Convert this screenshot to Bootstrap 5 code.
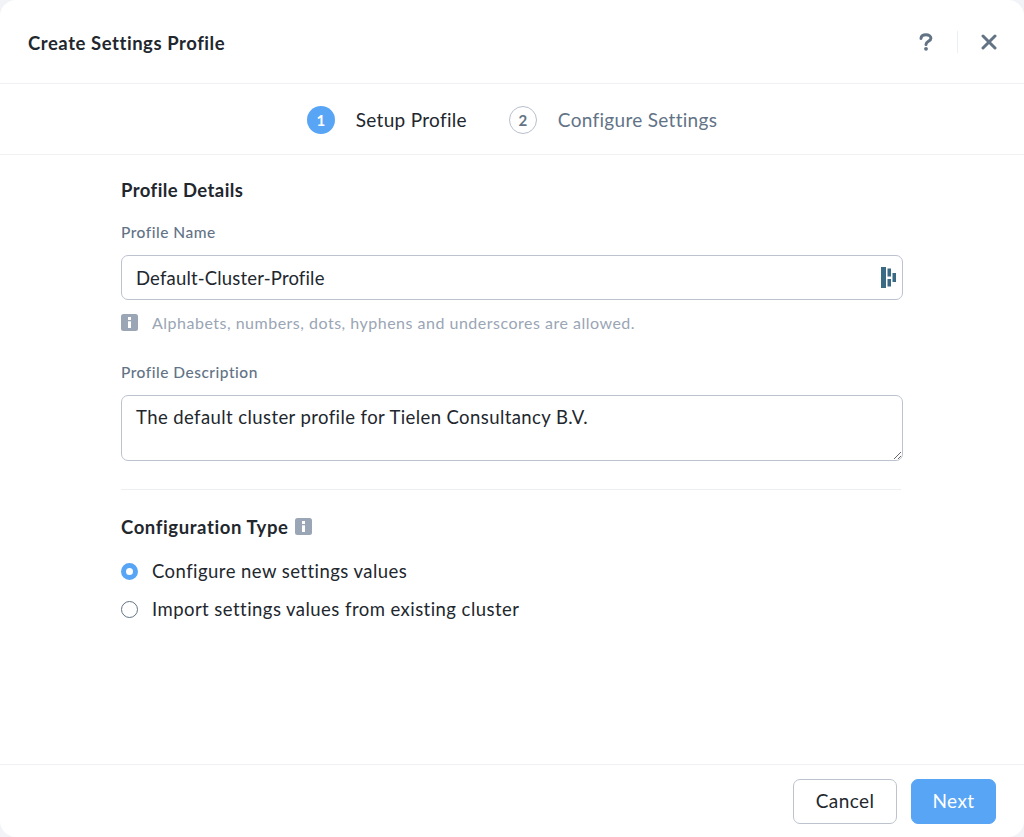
<!doctype html>
<html lang="en">
<head>
<meta charset="utf-8">
<title>Create Settings Profile</title>
<link href="https://cdn.jsdelivr.net/npm/bootstrap@5.3.0/dist/css/bootstrap.min.css" rel="stylesheet">
<style>
html,body{height:100%;}
body{background:#f2f3f6;font-family:Lato,"Liberation Sans",sans-serif;color:#22272e;overflow:hidden;}
.dlg{height:837px;width:1024px;background:#fff;border-radius:16px;}
.dlg-head{height:84px;padding:0 27px 0 28px;border-bottom:1px solid #f0f1f4;}
.dlg-title{font-size:18.5px;font-weight:700;letter-spacing:.55px;margin:4px 0 0;}
.head-sep{width:1px;height:22px;background:#eceef1;margin:0 23px 0 24px;}
.help-ico{margin-top:1px;}
.step-bar{height:71px;border-bottom:1px solid #f0f1f4;gap:42px;padding-top:2px;}
.step-num{width:28px;height:28px;border-radius:50%;font-size:15px;font-weight:700;}
.step-on{background:#59a5f5;color:#fff;}
.step-off{border:1.5px solid #b8bfcc;color:#627386;background:#fff;}
.step-label{font-size:19px;letter-spacing:.3px;margin-left:21px;}
.step-muted{color:#627386;}
.dlg-body{padding:23px 121px 0;height:609px;}
.sec-title{font-size:18.5px;font-weight:700;line-height:24px;letter-spacing:.42px;margin:0;}
.cfg-title{letter-spacing:.6px;}
.fld-label{font-size:15.5px;font-weight:500;color:#627386;line-height:20px;letter-spacing:.5px;margin:20px 0 13px;display:block;}
.fld-input,.fld-area{width:100%;border:1px solid #bcc3cf;border-radius:7px;font-size:18.5px;color:#22272e;padding:0 14px;box-shadow:none;}
.fld-input{height:45px;letter-spacing:.17px;}
.fld-area{height:66px;padding-top:8px;padding-bottom:0;line-height:26px;display:block;letter-spacing:.41px;}
.fld-input:focus,.fld-area:focus{border-color:#bcc3cf;box-shadow:none;}
.key-icon{right:6px;top:12px;}
.hint{font-size:16px;letter-spacing:.5px;color:#9aa5b5;line-height:20px;margin-top:13px;margin-bottom:29px;}
.info-ico{width:17px;height:17px;flex:none;}
.hint-ico{margin-right:14px;margin-top:-2px;}
.cfg-ico{margin-left:6px;margin-top:-1px;}
.rule{border-top:1px solid #eceef1;margin:28px 2px 25px 0;}
.radio-row{height:38px;font-size:18.5px;letter-spacing:.45px;padding:0;margin:0;min-height:0;}
.radio-dot{width:17px;height:17px;margin:-2px 14px 0 0 !important;float:none !important;flex:none;border:1.5px solid #627386;}
.radio-dot:checked{background-color:#fff;border:5px solid #59a5f5;background-image:none;}
.radio-dot:focus{box-shadow:none;}
.radios{margin-top:14px;}
.dlg-foot{height:73px;border-top:1px solid #f0f1f4;padding:0 28px 0 0;gap:14px;}
.foot-btn{width:104px;height:45px;font-size:19px;letter-spacing:.4px;border-radius:7px;padding:0;}
.foot-cancel{background:#fff;border:1px solid #bcc3cf;color:#22272e;}
.foot-next{width:85px;background:#59a5f5;border:1px solid #59a5f5;color:#fff;}
</style>
</head>
<body>
<div class="dlg d-flex flex-column">
  <div class="dlg-head d-flex align-items-center">
    <h1 class="dlg-title flex-grow-1">Create Settings Profile</h1>
    <svg class="help-ico" width="14" height="18" viewBox="0 0 14 18" aria-label="Help"><path d="M2 5.4C2.2 3 4.3 1.8 7 1.8s4.9 1.300 4.900 3.400c0 3.200-4.900 3-4.900 6.200" fill="none" stroke="#627386" stroke-width="3" stroke-linecap="round"/><circle cx="7" cy="15.800" r="1.900" fill="#627386"/></svg>
    <span class="head-sep"></span>
    <svg width="16" height="16" viewBox="0 0 16 16" aria-label="Close"><path d="M2 2l12 12M14 2L2 14" fill="none" stroke="#627386" stroke-width="3" stroke-linecap="round"/></svg>
  </div>
  <div class="step-bar d-flex align-items-center justify-content-center">
    <div class="d-flex align-items-center">
      <span class="step-num step-on d-flex align-items-center justify-content-center">1</span>
      <span class="step-label">Setup Profile</span>
    </div>
    <div class="d-flex align-items-center">
      <span class="step-num step-off d-flex align-items-center justify-content-center">2</span>
      <span class="step-label step-muted">Configure Settings</span>
    </div>
  </div>
  <div class="dlg-body">
    <h2 class="sec-title">Profile Details</h2>
    <label class="fld-label" for="pn">Profile Name</label>
    <div class="position-relative">
      <input id="pn" class="form-control fld-input" value="Default-Cluster-Profile">
      <svg class="key-icon position-absolute" width="16" height="21" viewBox="0 0 16 21"><g fill="#3b6a85"><rect x="0" y="0" width="5" height="21"/><rect x="6.500" y="1.500" width="3.500" height="8"/><rect x="6.500" y="12" width="3.500" height="7.500"/><rect x="11.500" y="6" width="3.500" height="9"/></g></svg>
    </div>
    <div class="hint d-flex align-items-center">
      <svg class="info-ico hint-ico" viewBox="0 0 17 17"><rect width="17" height="17" rx="2.5" fill="#9aa5b5"/><rect x="7" y="3" width="3" height="3" fill="#fff"/><rect x="7" y="7.3" width="3" height="6.7" fill="#fff"/></svg>
      <span>Alphabets, numbers, dots, hyphens and underscores are allowed.</span>
    </div>
    <label class="fld-label" for="pd">Profile Description</label>
    <textarea id="pd" class="form-control fld-area">The default cluster profile for Tielen Consultancy B.V.</textarea>
    <div class="rule"></div>
    <div class="d-flex align-items-center">
      <h2 class="sec-title cfg-title">Configuration Type</h2>
      <svg class="info-ico cfg-ico" viewBox="0 0 17 17"><rect width="17" height="17" rx="2.5" fill="#9aa5b5"/><rect x="7" y="3" width="3" height="3" fill="#fff"/><rect x="7" y="7.3" width="3" height="6.7" fill="#fff"/></svg>
    </div>
    <div class="radios">
      <label class="form-check radio-row d-flex align-items-center"><input class="form-check-input radio-dot" type="radio" name="cfg" checked>Configure new settings values</label>
      <label class="form-check radio-row d-flex align-items-center"><input class="form-check-input radio-dot" type="radio" name="cfg">Import settings values from existing cluster</label>
    </div>
  </div>
  <div class="dlg-foot d-flex align-items-center justify-content-end">
    <button type="button" class="btn foot-btn foot-cancel">Cancel</button>
    <button type="button" class="btn foot-btn foot-next">Next</button>
  </div>
</div>
<script src="https://cdn.jsdelivr.net/npm/bootstrap@5.3.0/dist/js/bootstrap.bundle.min.js"></script>
</body>
</html>
